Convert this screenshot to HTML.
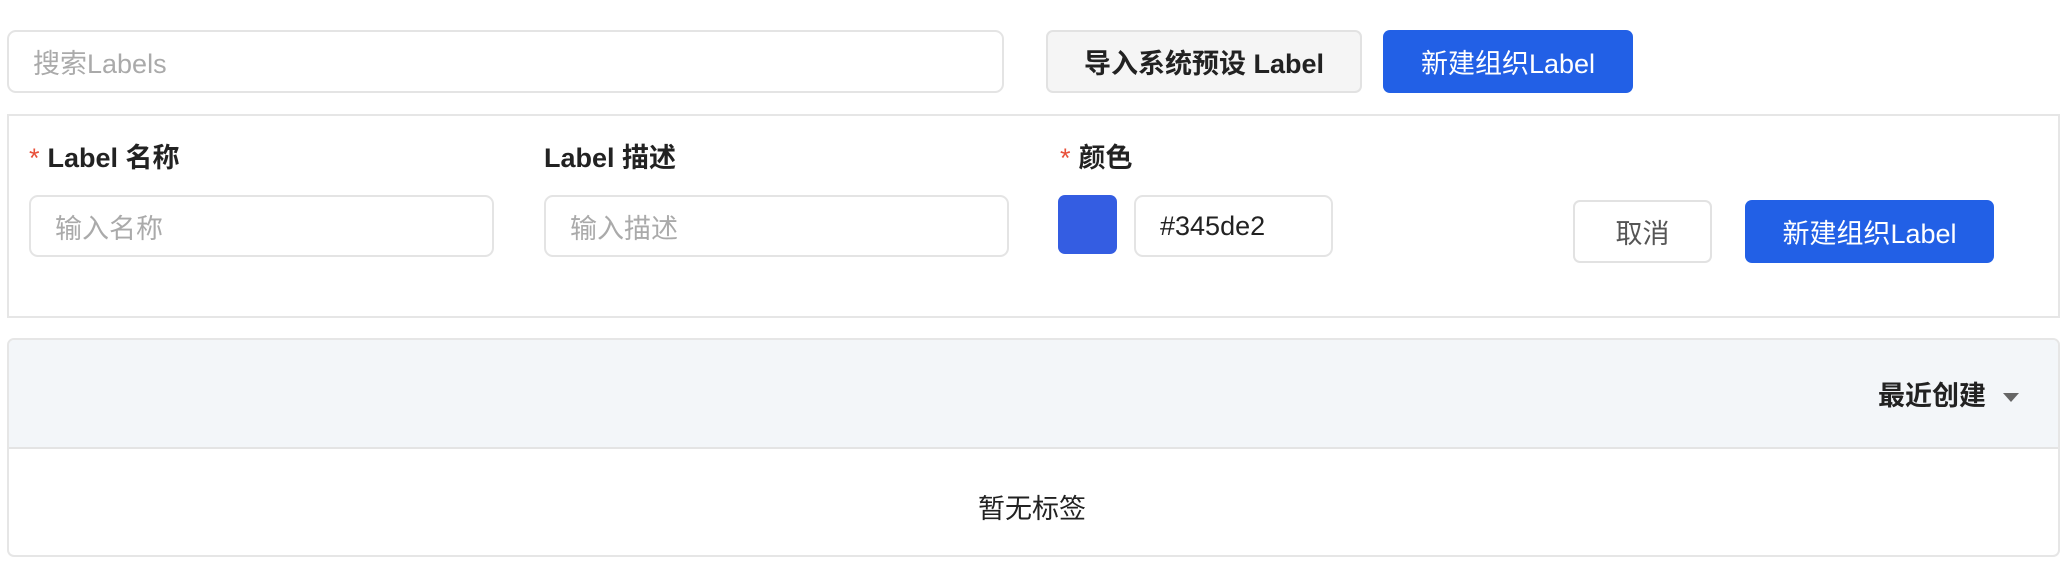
<!DOCTYPE html>
<html><head><meta charset="utf-8"><style>
*{box-sizing:border-box;margin:0;padding:0}
body{width:2064px;height:566px;background:#fff;font-family:"Liberation Sans","Noto Sans CJK SC",sans-serif;color:#222;position:relative;overflow:hidden}
.a{position:absolute}
.inp{border:2px solid #e4e4e4;border-radius:9px;background:#fff;font-size:27px;color:#aaa;display:flex;align-items:center;padding-left:24px}
.btn{border-radius:7px;display:flex;align-items:center;justify-content:center;font-size:27px}
.blue{background:#2260e6;color:#fff}
.lbl{font-size:27px;font-weight:600;color:#222;line-height:32px}
.star{color:#e8503a;font-weight:normal;margin-right:8px}
</style></head><body>
<div class="a inp" style="left:7px;top:30px;width:997px;height:63px">搜索Labels</div>
<div class="a btn" style="left:1046px;top:30px;width:316px;height:63px;background:#f5f5f5;border:2px solid #e2e2e2;font-weight:bold;color:#222">导入系统预设 Label</div>
<div class="a btn blue" style="left:1383px;top:30px;width:250px;height:63px">新建组织Label</div>

<div class="a" style="left:7px;top:114px;width:2053px;height:204px;border:2px solid #e6e6e6"></div>
<div class="a lbl" style="left:29px;top:142px"><span class="star">*</span>Label 名称</div>
<div class="a lbl" style="left:544px;top:142px">Label 描述</div>
<div class="a lbl" style="left:1060px;top:142px"><span class="star">*</span>颜色</div>
<div class="a inp" style="left:29px;top:195px;width:465px;height:62px">输入名称</div>
<div class="a inp" style="left:544px;top:195px;width:465px;height:62px">输入描述</div>
<div class="a" style="left:1058px;top:195px;width:59px;height:59px;background:#345de2;border-radius:7px"></div>
<div class="a inp" style="left:1134px;top:195px;width:199px;height:62px;color:#222">#345de2</div>
<div class="a btn" style="left:1573px;top:200px;width:139px;height:63px;border:2px solid #e2e2e2;color:#555">取消</div>
<div class="a btn blue" style="left:1745px;top:200px;width:249px;height:63px">新建组织Label</div>

<div class="a" style="left:7px;top:338px;width:2053px;height:219px;border:2px solid #e6e6e6;border-radius:7px;overflow:hidden">
<div style="height:109px;background:#f3f6f9;border-bottom:2px solid #e4e4e4"></div>
</div>
<div class="a lbl" style="left:1878px;top:380px">最近创建</div>
<div class="a" style="left:2003px;top:393px;width:0;height:0;border-left:8px solid transparent;border-right:8px solid transparent;border-top:9px solid #666"></div>
<div class="a" style="left:978px;top:487px;font-size:27px;color:#222">暂无标签</div>
</body></html>
